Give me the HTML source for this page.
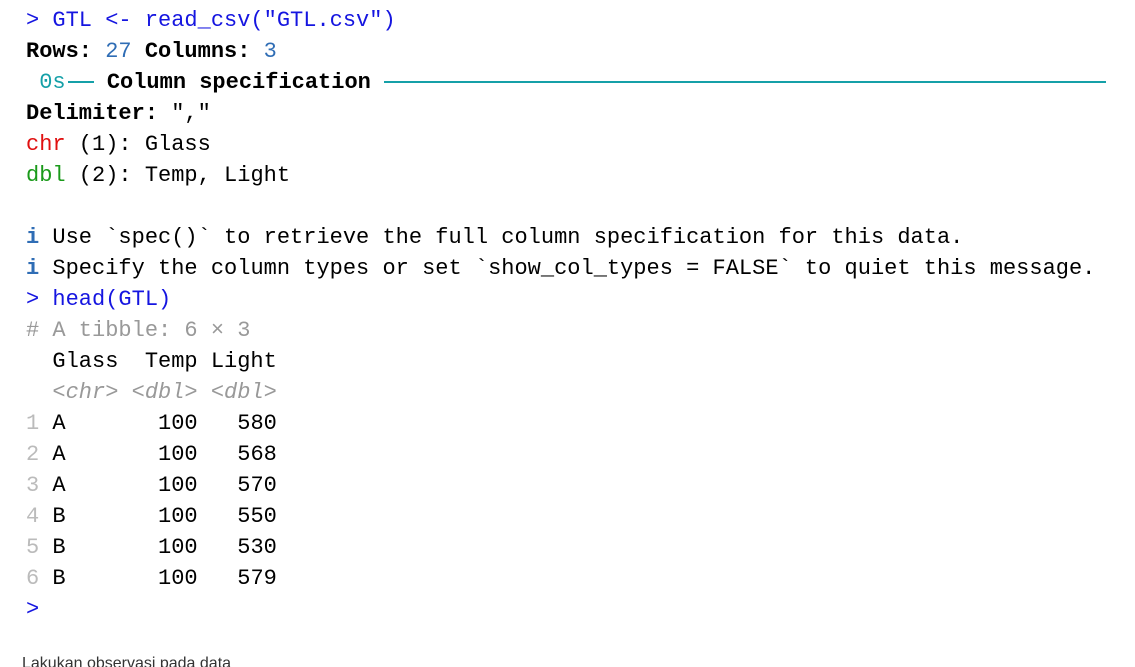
<!DOCTYPE html>
<html><head><meta charset="utf-8"><style>
html,body{margin:0;padding:0;background:#fff;width:1135px;height:667px;overflow:hidden;position:relative}
pre{position:absolute;left:26px;top:5px;margin:0;font-family:"Liberation Mono",monospace;font-size:22px;line-height:31px;color:#000}
.b{color:#1515e0}.n{color:#2f6db5}.t{color:#15a0a8}.r{color:#e01010}.g{color:#1a9a1a}.gr{color:#999}.lg{color:#bbb}
.bo{font-weight:bold}.i{color:#2f6db5;font-weight:bold}
.rule{display:inline-block;width:722px;border-top:2px solid #15a0a8;vertical-align:middle;margin-left:0}
.dash{display:inline-block;width:26px;border-top:2px solid #15a0a8;vertical-align:middle;margin-left:2px}
.foot{position:absolute;left:22px;top:655px;font-family:"Liberation Sans",sans-serif;font-size:16px;color:#333}
</style></head><body>
<pre><span class="b">&gt; GTL &lt;- read_csv("GTL.csv")</span>
<span class="bo">Rows:</span> <span class="n">27</span> <span class="bo">Columns:</span> <span class="n">3</span>
 <span class="t">0s</span><span class="dash"></span> <span class="bo">Column specification</span> <span class="rule"></span>
<span class="bo">Delimiter:</span> ","
<span class="r">chr</span> (1): Glass
<span class="g">dbl</span> (2): Temp, Light

<span class="i">i</span> Use `spec()` to retrieve the full column specification for this data.
<span class="i">i</span> Specify the column types or set `show_col_types = FALSE` to quiet this message.
<span class="b">&gt; head(GTL)</span>
<span class="gr"># A tibble: 6 × 3</span>
  Glass  Temp Light
  <span class="gr"><i>&lt;chr&gt;</i> <i>&lt;dbl&gt;</i> <i>&lt;dbl&gt;</i></span>
<span class="lg">1</span> A       100   580
<span class="lg">2</span> A       100   568
<span class="lg">3</span> A       100   570
<span class="lg">4</span> B       100   550
<span class="lg">5</span> B       100   530
<span class="lg">6</span> B       100   579
<span class="b">&gt;</span></pre>
<div class="foot">Lakukan observasi pada data</div>
</body></html>
